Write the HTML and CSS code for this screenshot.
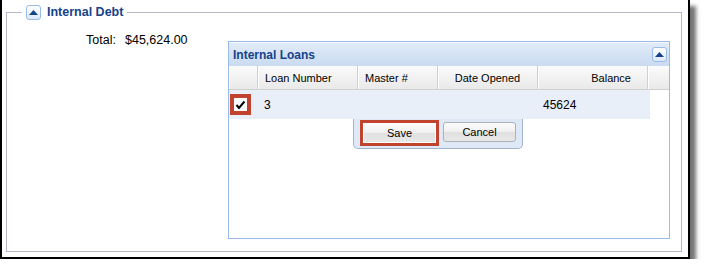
FILE: index.html
```html
<!DOCTYPE html>
<html>
  <head>
    <title>Internal Debt</title>
    <link rel="stylesheet" href="styles.css">
  </head>
  <body>
    <div class="frame">
      <fieldset class="debt">
        <legend>
          <span class="tool">
            <svg width="9" height="5" viewBox="0 0 9 5"><polygon points="0,5 9,5 4.5,0" fill="#15428b"/></svg>
          </span>
          <span class="legend-text">Internal Debt</span>
        </legend>
        <div class="debt-body">
          <div class="total">
            <span class="total-label">Total:</span>
            <span class="total-value">$45,624.00</span>
          </div>
          <div class="panel">
            <div class="panel-head">
              <span class="panel-title">Internal Loans</span>
              <span class="tool">
                <svg width="9" height="5" viewBox="0 0 9 5"><polygon points="0,5 9,5 4.5,0" fill="#15428b"/></svg>
              </span>
            </div>
            <div class="grid-head">
              <div class="hcell c-check"></div>
              <div class="hcell c-loan">Loan Number</div>
              <div class="hcell c-master">Master #</div>
              <div class="hcell c-date center">Date Opened</div>
              <div class="hcell c-bal right">Balance</div>
              <div class="hcell c-rest"></div>
            </div>
            <div class="row">
              <div class="cell c-check">
                <span class="check">
                  <svg width="11" height="10" viewBox="0 0 11 10"><polyline points="1.5,5 4,8 9.5,1.5" fill="none" stroke="#000" stroke-width="2"/></svg>
                </span>
              </div>
              <div class="cell c-loan">3</div>
              <div class="cell c-master"></div>
              <div class="cell c-date"></div>
              <div class="cell c-bal">45624</div>
            </div>
            <div class="editor">
              <span class="mark"><button class="btn">Save</button></span>
              <button class="btn">Cancel</button>
            </div>
          </div>
        </div>
      </fieldset>
    </div>
  </body>
</html>
```

FILE: styles.css
```css
body {
    margin: 0;
    padding: 0;
    font-family: "Liberation Sans", Arial, sans-serif;
    background: #fff;
}

.frame {
    width: 690px;
    height: 259px;
    box-sizing: border-box;
    border: 2px solid #000;
    border-top: 0;
    box-shadow: 6px 6px 4px rgba(0, 0, 0, 0.55);
    background: #fff;
    padding-top: 4px;
}

.debt {
    margin: 0 6px 0 4px;
    padding: 0;
    border: 1px solid #b5b8c8;
    height: 248px;
    box-sizing: border-box;
}

.debt legend {
    display: flex;
    align-items: center;
    gap: 6px;
    padding: 0 4px;
    margin-left: 15px;
    height: 16px;
}

.legend-text {
    color: #15428b;
    font-weight: bold;
    font-size: 12.5px;
}

.tool {
    width: 13px;
    height: 13px;
    border: 1px solid #99bbe8;
    border-radius: 3px;
    background: linear-gradient(#ffffff, #dde8f7);
    display: flex;
    align-items: center;
    justify-content: center;
}

.debt-body {
    display: grid;
    grid-template-columns: 221px 442px;
    padding-top: 13px;
}

.total {
    display: flex;
    gap: 9px;
    font-size: 12.5px;
    color: #000;
    align-self: start;
}

.total-label {
    width: 109px;
    text-align: right;
}

.panel {
    margin-top: 8px;
    width: 442px;
    height: 198px;
    box-sizing: border-box;
    border: 1px solid #99bbe8;
}

.panel-head {
    height: 24px;
    display: flex;
    align-items: center;
    justify-content: space-between;
    padding: 0 2px 0 4px;
    background: linear-gradient(#e1ebf8, #cadbf1);
    border-top: 1px solid #f4f8fd;
    box-sizing: border-box;
}

.panel-title {
    color: #15428b;
    font-weight: bold;
    font-size: 12px;
}

.grid-head {
    display: flex;
    height: 24px;
    background: linear-gradient(#fbfbfb, #e9e9e9);
    border-bottom: 1px solid #d0d0d0;
    box-sizing: border-box;
    font-size: 11px;
    color: #000;
}

.hcell {
    border-right: 1px solid #d0d0d0;
    box-shadow: inset 1px 0 0 #fff;
    display: flex;
    align-items: center;
    padding-left: 7px;
    box-sizing: border-box;
}

.hcell.center {
    justify-content: center;
    padding-left: 0;
}

.hcell.right {
    justify-content: flex-end;
    padding-right: 16px;
}

.c-check { width: 29px; padding-left: 0; }
.c-loan { width: 100px; }
.c-master { width: 80px; }
.c-date { width: 100px; }
.c-bal { width: 110px; }
.c-rest { flex: 1; border-right: 0; }

.row {
    display: flex;
    width: 421px;
    height: 29px;
    background: #e9eff9;
    font-size: 12px;
    color: #000;
}

.cell {
    display: flex;
    align-items: center;
    padding-left: 6px;
    box-sizing: border-box;
}

.cell.c-check {
    padding-left: 1px;
}

.cell.c-bal {
    padding-left: 5px;
}

.check {
    width: 13px;
    height: 13px;
    background: #fff;
    border: 4px solid #c1432e;
    display: flex;
    align-items: center;
    justify-content: center;
}

.editor {
    margin-left: 124px;
    width: 170px;
    box-sizing: border-box;
    padding: 3px 6px 5px 9px;
    display: flex;
    gap: 7px;
    background: #dfe8f6;
    border: 1px solid #a3b5cc;
    border-top: 0;
    border-radius: 0 0 5px 5px;
}

.mark {
    display: flex;
    margin: -2px -3px -3px -3px;
    border: 3px solid #c1432e;
}

.btn {
    width: 73px;
    height: 20px;
    padding: 0;
    font-family: "Liberation Sans", Arial, sans-serif;
    font-size: 11px;
    color: #000;
    border: 1px solid #b0b0b0;
    border-radius: 3px;
    background: linear-gradient(#fbfbfb 0, #f0f0f0 50%, #e0e0e0 51%, #e8e8e8 100%);
}

.mark .btn {
    border-radius: 0;
    border-color: #fff;
}
```
